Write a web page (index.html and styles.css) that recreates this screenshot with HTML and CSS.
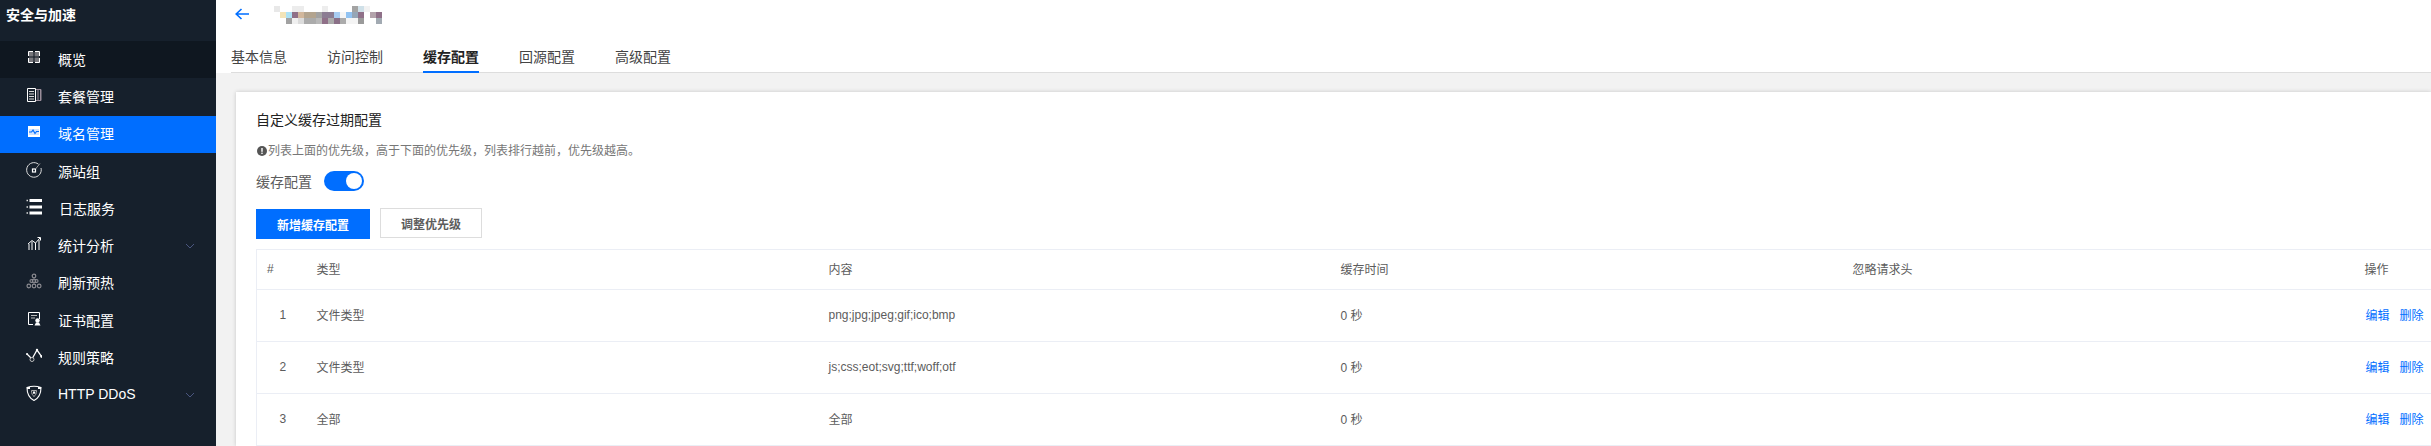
FILE: index.html
```html
<!DOCTYPE html>
<html lang="zh-CN">
<head>
<meta charset="UTF-8">
<meta name="viewport" content="width=device-width, initial-scale=1.0">
<title>缓存配置</title>
<link rel="stylesheet" href="styles.css">
</head>
<body>
<div class="page">
    <aside class="sidebar">
        <div class="sidebar_title">安全与加速</div>
        <a class="menu_item menu_item_dark">
            <svg class="menu_icon" viewBox="0 0 16 16"><rect x="3" y="2" width="4.500" height="4.500" fill="#77777c"/><rect x="8.500" y="2" width="4.500" height="4.500" fill="#77777c"/><rect x="3" y="7.500" width="4.500" height="4.500" fill="#77777c"/><rect x="8.500" y="7.500" width="4.500" height="4.500" fill="#77777c"/><path d="M2.500 6V1.500H7M9 1.500h4.500V6M13.500 8v4.500H9M7 12.500H2.500V8" fill="none" stroke="#fff"/></svg>
            <span class="menu_text">概览</span>
        </a>
        <a class="menu_item">
            <svg class="menu_icon" viewBox="0 0 16 16"><path d="M1.500 1.500h8v13h-8z" fill="none" stroke="#fff"/><path d="M3 4.500h5M3 7h5M3 9.500h5M3 12h5" stroke="#d8d8d8"/><path d="M10 2.500h5v11h-5M12 3v10M14.500 3v10" fill="none" stroke="#9a8d9a" stroke-width="1"/></svg>
            <span class="menu_text">套餐管理</span>
        </a>
        <a class="menu_item menu_item_active">
            <svg class="menu_icon" viewBox="0 0 16 16"><rect x="2" y="2" width="12" height="11" fill="#fff"/><path d="M3 5h10v6H3z" fill="#cfe2ff"/><path d="M3 8h2.500l1.500-2 2 3.500 1.500-2H13" fill="none" stroke="#006eff" stroke-width="1.200"/></svg>
            <span class="menu_text">域名管理</span>
        </a>
        <a class="menu_item">
            <svg class="menu_icon" viewBox="0 0 16 16"><path d="M12.500 2.200A7.300 7.300 0 1 0 15 6" fill="none" stroke="#ddd"/><rect x="6.500" y="7" width="3" height="3" fill="none" stroke="#fff" stroke-width="1.200"/><path d="M9.500 7 14 1.500" stroke="#999"/></svg>
            <span class="menu_text">源站组</span>
        </a>
        <a class="menu_item">
            <svg class="menu_icon" viewBox="0 0 16 16"><path d="M3.500 1.500H16M3.500 8H16M3.500 14H16" stroke="#fff" stroke-width="3"/><path d="M0.500 1.500H2M0.500 8H2M0.500 14H2" stroke="#ddd" stroke-width="1.500"/></svg>
            <span class="menu_text menu_text_shift">日志服务</span>
        </a>
        <a class="menu_item">
            <svg class="menu_icon" viewBox="0 0 16 16"><path d="M3 14V8M6 14V5.500M9.500 14V7M13 14V4" stroke="#fff" fill="none"/><path d="M2 8 6 4.500l3.500 2.500L14 2" stroke="#fff" fill="none"/><path d="M11.500 1.500H14.500V4.500" stroke="#fff" fill="none"/></svg>
            <span class="menu_text">统计分析</span>
            <svg class="menu_arrow" viewBox="0 0 10 6"><path d="M1 1l4 4 4-4" fill="none" stroke="#4a5680"/></svg>
        </a>
        <a class="menu_item">
            <svg class="menu_icon" viewBox="0 0 16 16" fill="none" stroke="#8a8a90" stroke-width="1.200"><circle cx="8" cy="3" r="1.800"/><circle cx="8" cy="8" r="1.800"/><circle cx="5.500" cy="8" r="1.500"/><circle cx="10.500" cy="8" r="1.500"/><circle cx="2.800" cy="13" r="1.800"/><circle cx="8" cy="13" r="1.800"/><circle cx="13.200" cy="13" r="1.800"/></svg>
            <span class="menu_text">刷新预热</span>
        </a>
        <a class="menu_item">
            <svg class="menu_icon" viewBox="0 0 16 16"><path d="M7 13.500H2.500v-12h11V8" fill="none" stroke="#fff"/><path d="M5 4.500h6M5 7h4" stroke="#bbb"/><circle cx="11.500" cy="9.500" r="2.200" fill="#fff"/><path d="M8.500 14.500l1.500-3h3l1.500 3z" fill="#fff"/></svg>
            <span class="menu_text">证书配置</span>
        </a>
        <a class="menu_item">
            <svg class="menu_icon" viewBox="0 0 16 16"><path d="M1 6l5 5 5-9 5 7" fill="none" stroke="#fff" stroke-width="1.300"/><circle cx="6" cy="11.500" r="2" fill="#16202c" stroke="#bbb"/><circle cx="1" cy="6" r="1" fill="#fff"/><circle cx="11" cy="2" r="1.200" fill="#fff"/><circle cx="15.500" cy="8.500" r="1.200" fill="#fff"/></svg>
            <span class="menu_text">规则策略</span>
        </a>
        <a class="menu_item">
            <svg class="menu_icon" viewBox="0 0 16 16"><path d="M1 2.500c4-1.500 10-1.500 14 0 0 6-2 10.500-7 13-5-2.500-7-7-7-13z" fill="none" stroke="#fff" stroke-width="1.100"/><path d="M1 3h3M12 3h3" stroke="#fff" stroke-width="2"/><path d="M5.500 5.500h5c0 3-1 5-2.500 6-1.500-1-2.500-3-2.500-6z" fill="none" stroke="#aaa"/><rect x="7" y="6.500" width="2.200" height="2.200" fill="#fff"/></svg>
            <span class="menu_text">HTTP DDoS</span>
            <svg class="menu_arrow" viewBox="0 0 10 6"><path d="M1 1l4 4 4-4" fill="none" stroke="#4a5680"/></svg>
        </a>
    </aside>

    <main class="main">
        <div class="top_bar">
            <div class="title_row">
                <svg class="back_arrow" viewBox="0 0 14 12"><path d="M6.500 1 1.200 6l5.300 5M1.500 6H14" fill="none" stroke="#006eff" stroke-width="1.600"/></svg>
                <!-- blurred domain name -->
                <svg class="mosaic" viewBox="0 0 108 18" shape-rendering="crispEdges">
                    <rect x="0" y="0" width="6" height="6" fill="#e8e8e8"/><rect x="18" y="0" width="12" height="6" fill="#ececec"/><rect x="48" y="0" width="6" height="6" fill="#ededed"/><rect x="78" y="0" width="6" height="6" fill="#a3a3a3"/><rect x="84" y="0" width="6" height="6" fill="#cfe0e8"/><rect x="90" y="0" width="6" height="6" fill="#f2f2f2"/>
                    <rect x="6" y="6" width="6" height="6" fill="#f3e4b8"/><rect x="12" y="6" width="6" height="6" fill="#aee2f5"/><rect x="18" y="6" width="6" height="6" fill="#8f7088"/><rect x="24" y="6" width="6" height="6" fill="#d2b79c"/><rect x="30" y="6" width="12" height="6" fill="#b3a48f"/><rect x="42" y="6" width="6" height="6" fill="#a2a2a2"/><rect x="48" y="6" width="12" height="6" fill="#8b7c92"/><rect x="60" y="6" width="6" height="6" fill="#a8cdf2"/><rect x="66" y="6" width="6" height="6" fill="#f6f6f6"/><rect x="72" y="6" width="6" height="6" fill="#92c3f2"/><rect x="78" y="6" width="6" height="6" fill="#96a6b6"/><rect x="84" y="6" width="6" height="6" fill="#8f7088"/><rect x="96" y="6" width="6" height="6" fill="#b3a3ab"/><rect x="102" y="6" width="6" height="6" fill="#8f7088"/>
                    <rect x="12" y="12" width="6" height="6" fill="#a2a2a2"/><rect x="18" y="12" width="6" height="6" fill="#f0f0f0"/><rect x="24" y="12" width="6" height="6" fill="#dcdcdc"/><rect x="30" y="12" width="12" height="6" fill="#ababab"/><rect x="42" y="12" width="6" height="6" fill="#b8b8b8"/><rect x="48" y="12" width="6" height="6" fill="#8f7088"/><rect x="54" y="12" width="6" height="6" fill="#ababab"/><rect x="60" y="12" width="6" height="6" fill="#8a7087"/><rect x="66" y="12" width="6" height="6" fill="#ababab"/><rect x="72" y="12" width="12" height="6" fill="#f4f4f4"/><rect x="84" y="12" width="6" height="6" fill="#9a9a9a"/><rect x="102" y="12" width="6" height="6" fill="#a2aab2"/>
                </svg>
            </div>
            <nav class="tabs">
                <a class="tab">基本信息</a>
                <a class="tab">访问控制</a>
                <a class="tab tab_active">缓存配置</a>
                <a class="tab">回源配置</a>
                <a class="tab">高级配置</a>
            </nav>
        </div>

        <section class="card">
            <div class="card_title">自定义缓存过期配置</div>
            <div class="card_note">
                <svg class="note_icon" viewBox="0 0 10 10"><circle cx="5" cy="5" r="5" fill="#555"/><rect x="4.300" y="2" width="1.400" height="3.800" fill="#fff"/><rect x="4.300" y="6.600" width="1.400" height="1.400" fill="#fff"/></svg>
                <span>列表上面的优先级，高于下面的优先级，列表排行越前，优先级越高。</span>
            </div>
            <div class="switch_row">
                <span>缓存配置</span>
                <span class="switch"><span class="switch_knob"></span></span>
            </div>
            <div class="button_row">
                <button class="btn btn_primary">新增缓存配置</button>
                <button class="btn btn_default">调整优先级</button>
            </div>
            <table class="rule_table">
                <colgroup>
                    <col class="col_index">
                    <col class="col_wide">
                    <col class="col_wide">
                    <col class="col_wide">
                    <col class="col_wide">
                    <col class="col_last">
                </colgroup>
                <thead>
                    <tr>
                        <th>#</th>
                        <th>类型</th>
                        <th>内容</th>
                        <th>缓存时间</th>
                        <th>忽略请求头</th>
                        <th>操作</th>
                    </tr>
                </thead>
                <tbody>
                    <tr>
                        <td class="cell_index">1</td>
                        <td>文件类型</td>
                        <td>png;jpg;jpeg;gif;ico;bmp</td>
                        <td>0 秒</td>
                        <td></td>
                        <td class="cell_actions"><a>编辑</a><a>删除</a></td>
                    </tr>
                    <tr>
                        <td class="cell_index">2</td>
                        <td>文件类型</td>
                        <td>js;css;eot;svg;ttf;woff;otf</td>
                        <td>0 秒</td>
                        <td></td>
                        <td class="cell_actions"><a>编辑</a><a>删除</a></td>
                    </tr>
                    <tr>
                        <td class="cell_index">3</td>
                        <td>全部</td>
                        <td>全部</td>
                        <td>0 秒</td>
                        <td></td>
                        <td class="cell_actions"><a>编辑</a><a>删除</a></td>
                    </tr>
                </tbody>
            </table>
        </section>
    </main>
</div>
</body>
</html>
```

FILE: styles.css
```css
html, body {
    margin: 0;
    height: 100%;
    overflow: hidden;
}
body {
    font-family: "Liberation Sans", "Noto Sans CJK SC", sans-serif;
    font-size: 12px;
    color: #5c5c5c;
    background: #f2f2f2;
}
.page {
    display: flex;
    height: 446px;
}

/* sidebar */
.sidebar {
    width: 216px;
    flex: none;
    background: #16202c;
    color: #fff;
}
.sidebar_title {
    height: 41px;
    box-sizing: border-box;
    padding: 5px 0 0 6px;
    font-size: 14px;
    line-height: 20px;
    font-weight: 700;
}
.menu_item {
    display: flex;
    align-items: center;
    height: 37.3px;
    padding-left: 26px;
    font-size: 14px;
    color: #fff;
}
.menu_item_dark {
    background-color: #0f1720;
}
.menu_item_active {
    background: #006eff;
}
.menu_icon {
    width: 16px;
    height: 16px;
    margin: 0 16px 4px 0;
    flex: none;
}
.menu_text {
    margin-bottom: 2px;
}
.menu_text_shift {
    margin-left: 1px;
}
.menu_arrow {
    width: 10px;
    height: 6px;
    margin-left: auto;
    margin-right: 21px;
}

/* top bar */
.main {
    flex: 1;
    min-width: 0;
}
.top_bar {
    height: 73px;
    background: #fff;
}
.title_row {
    display: flex;
    align-items: flex-start;
    height: 29px;
    padding-left: 19px;
}
.back_arrow {
    width: 14px;
    height: 12px;
    margin-top: 8px;
}
.mosaic {
    width: 108px;
    height: 18px;
    margin: 6px 0 0 25px;
}
.tabs {
    display: flex;
    gap: 40px;
    height: 44px;
    box-sizing: border-box;
    margin-left: 15px;
    border-bottom: 1px solid #ddd;
}
.tab {
    height: 44px;
    box-sizing: border-box;
    padding-top: 18px;
    font-size: 14px;
    line-height: 20px;
    color: #444;
}
.tab_active {
    color: #222;
    font-weight: 700;
    border-bottom: 2px solid #006eff;
}

/* card */
.card {
    margin: 19px 0 0 20px;
    padding: 18px 0 0 20px;
    height: 354px;
    box-sizing: border-box;
    background: #fff;
    box-shadow: 0 0 4px rgba(0, 0, 0, .18);
}
.card_title {
    font-size: 14px;
    line-height: 20px;
    color: #222;
}
.card_note {
    display: flex;
    align-items: center;
    gap: 1px;
    margin-top: 11px;
    line-height: 20px;
    color: #777;
}
.note_icon {
    width: 10px;
    height: 10px;
    margin-left: 1px;
}
.switch_row {
    display: flex;
    align-items: center;
    gap: 12px;
    margin-top: 10px;
    height: 20px;
    font-size: 14px;
    color: #5c5c5c;
}
.switch {
    display: flex;
    justify-content: flex-end;
    align-items: center;
    width: 40px;
    height: 20px;
    box-sizing: border-box;
    padding-right: 2px;
    border-radius: 10px;
    background: #006eff;
}
.switch_knob {
    width: 16px;
    height: 16px;
    border-radius: 50%;
    background: #fff;
}
.button_row {
    display: flex;
    align-items: flex-start;
    gap: 10px;
    margin-top: 18px;
}
.btn {
    height: 30px;
    padding: 0;
    font-family: inherit;
    font-size: 12px;
    font-weight: 700;
    border-radius: 0;
}
.btn_primary {
    width: 114px;
    color: #fff;
    background: #006eff;
    border: 0;
}
.btn_default {
    width: 102px;
    margin-top: -1px;
    color: #5c5c5c;
    background: #fff;
    border: 1px solid #ddd;
}

/* table */
.rule_table {
    width: 2175px;
    margin-top: 10px;
    table-layout: fixed;
    border-collapse: collapse;
    border-left: 1px solid #ebeef5;
}
.col_index {
    width: 50px;
}
.col_wide {
    width: 512px;
}
.col_last {
    width: 77px;
}
.rule_table th,
.rule_table td {
    padding: 0 0 2px 10px;
    font-weight: 400;
    text-align: left;
    border-top: 1px solid #ebeef5;
    border-bottom: 1px solid #ebeef5;
}
.rule_table th {
    height: 37px;
}
.rule_table td {
    height: 49px;
}
.rule_table .cell_index {
    padding-left: 2px;
    text-align: center;
}
.rule_table .cell_actions {
    padding-left: 11px;
    white-space: nowrap;
}
.cell_actions a {
    color: #006eff;
    margin-right: 10px;
}
```
